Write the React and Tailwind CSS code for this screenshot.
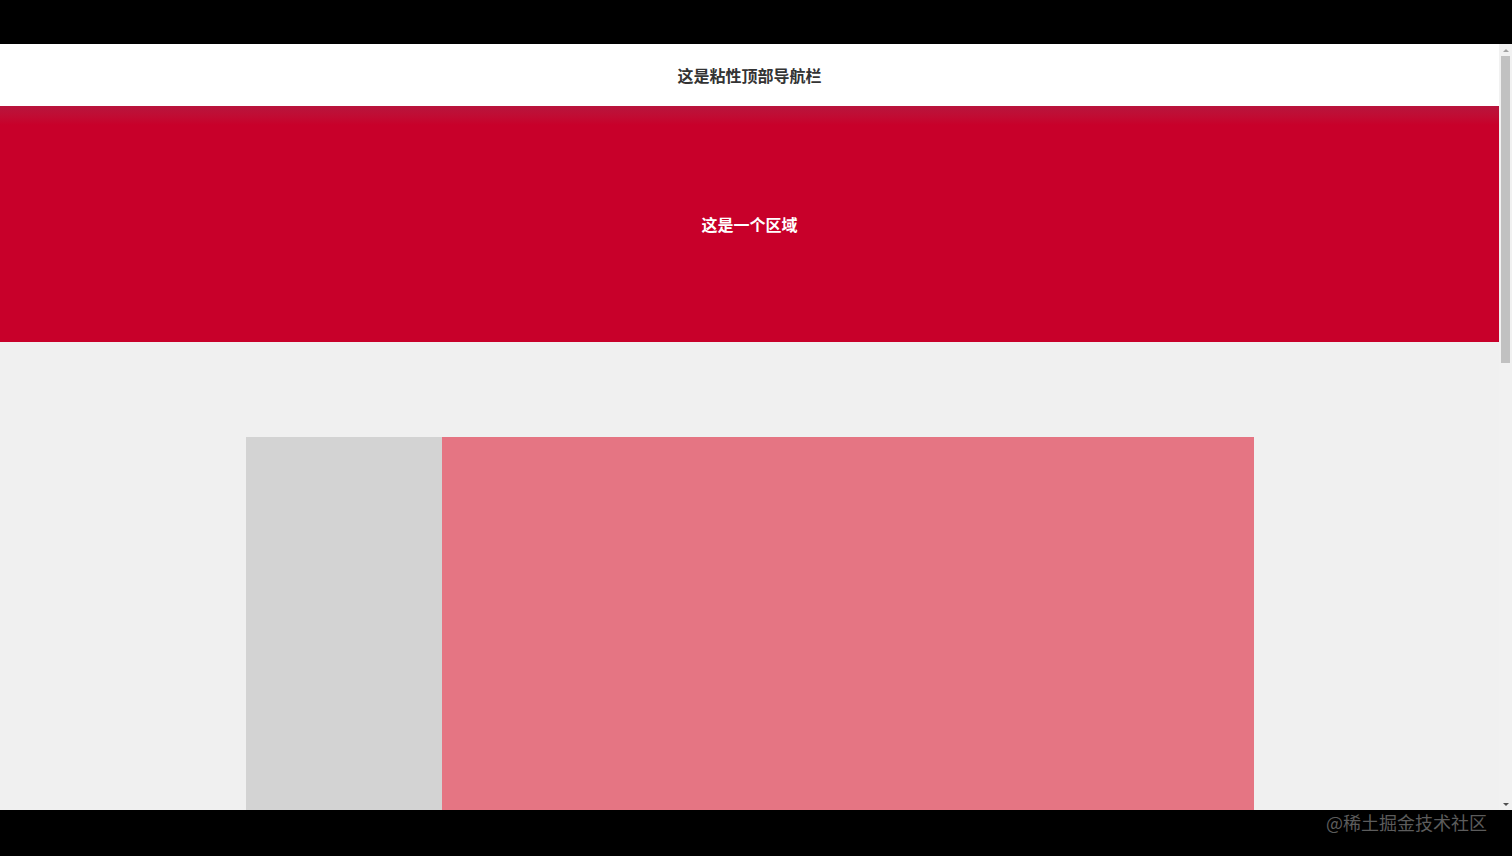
import React from 'react';

const font = { fontFamily: '"Noto Sans CJK SC", "Noto Sans", sans-serif' };

const Scrollbar = () => (
  <div className="w-[13px] shrink-0 bg-[#f1f1f1] flex flex-col items-center">
    <div className="h-[12px] flex items-center justify-center">
      <div className="w-0 h-0 border-l-[3px] border-r-[3px] border-b-[3px] border-l-transparent border-r-transparent border-b-[#a3a3a3]" />
    </div>
    <div className="w-[9px] h-[307px] bg-[#c1c1c1]" />
    <div className="flex-1" />
    <div className="h-[12px] flex items-center justify-center">
      <div className="w-0 h-0 border-l-[3px] border-r-[3px] border-t-[3px] border-l-transparent border-r-transparent border-t-[#505050]" />
    </div>
  </div>
);

const App = () => {
  return (
    <div className="w-[1512px] h-[856px] bg-black flex flex-col overflow-hidden" style={font}>
      <div className="h-[44px] shrink-0" />

      <div className="h-[766px] shrink-0 flex bg-[#f0f0f0]">
        <div className="flex-1 overflow-hidden">
          <header className="h-[62px] bg-white flex items-center justify-center">
            <span className="text-[16px] font-bold text-[#333]">这是粘性顶部导航栏</span>
          </header>

          <section className="h-[236px] bg-gradient-to-b from-[#b8143c] via-[#c8002a] via-[8%] to-[#c8002a] flex items-center justify-center">
            <span className="text-[16px] font-bold text-white">这是一个区域</span>
          </section>

          <main className="pt-[95px]">
            <div className="w-[1008px] mx-auto flex h-[600px]">
              <aside className="w-[196px] shrink-0 bg-[#d3d3d3]" />
              <div className="flex-1 bg-[#e57583]" />
            </div>
          </main>
        </div>
        <Scrollbar />
      </div>

      <div className="flex-1 flex justify-end items-start pr-[25px] pt-[0px]">
        <span className="text-[18px] leading-[24px] text-[#5c5c5c]">@稀土掘金技术社区</span>
      </div>
    </div>
  );
};

export default App;
